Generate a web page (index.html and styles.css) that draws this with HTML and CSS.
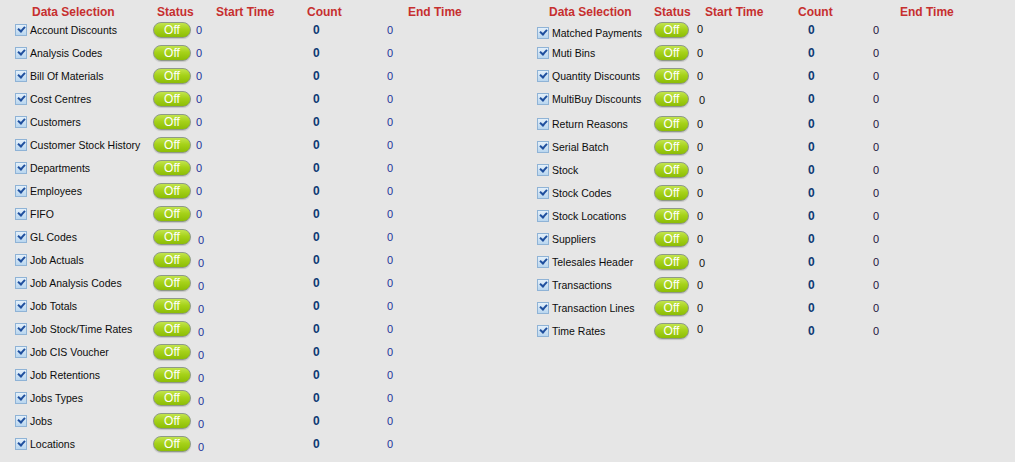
FILE: index.html
```html
<!DOCTYPE html>
<html lang="en">
<head>
    <meta charset="UTF-8">
    <title>Data Selection</title>
    <link rel="stylesheet" href="styles.css">
</head>
<body>
    <div class="page">
        <div class="panel left">
            <div class="row head">
                <div class="sel">Data Selection</div>
                <div class="stat">Status</div>
                <div class="v1">Start Time</div>
                <div class="cnt">Count</div>
                <div class="end">End Time</div>
            </div>
            <div class="row"><div class="sel"><span class="chk"></span>Account Discounts</div><div class="stat"><span class="btn">Off</span></div><div class="v1">0</div><div class="cnt">0</div><div class="end">0</div></div>
            <div class="row"><div class="sel"><span class="chk"></span>Analysis Codes</div><div class="stat"><span class="btn">Off</span></div><div class="v1">0</div><div class="cnt">0</div><div class="end">0</div></div>
            <div class="row"><div class="sel"><span class="chk"></span>Bill Of Materials</div><div class="stat"><span class="btn">Off</span></div><div class="v1">0</div><div class="cnt">0</div><div class="end">0</div></div>
            <div class="row"><div class="sel"><span class="chk"></span>Cost Centres</div><div class="stat"><span class="btn">Off</span></div><div class="v1">0</div><div class="cnt">0</div><div class="end">0</div></div>
            <div class="row"><div class="sel"><span class="chk"></span>Customers</div><div class="stat"><span class="btn">Off</span></div><div class="v1">0</div><div class="cnt">0</div><div class="end">0</div></div>
            <div class="row"><div class="sel"><span class="chk"></span>Customer Stock History</div><div class="stat"><span class="btn">Off</span></div><div class="v1">0</div><div class="cnt">0</div><div class="end">0</div></div>
            <div class="row"><div class="sel"><span class="chk"></span>Departments</div><div class="stat"><span class="btn">Off</span></div><div class="v1">0</div><div class="cnt">0</div><div class="end">0</div></div>
            <div class="row"><div class="sel"><span class="chk"></span>Employees</div><div class="stat"><span class="btn">Off</span></div><div class="v1">0</div><div class="cnt">0</div><div class="end">0</div></div>
            <div class="row"><div class="sel"><span class="chk"></span>FIFO</div><div class="stat"><span class="btn">Off</span></div><div class="v1">0</div><div class="cnt">0</div><div class="end">0</div></div>
            <div class="row low"><div class="sel"><span class="chk"></span>GL Codes</div><div class="stat"><span class="btn">Off</span></div><div class="v1">0</div><div class="cnt">0</div><div class="end">0</div></div>
            <div class="row low"><div class="sel"><span class="chk"></span>Job Actuals</div><div class="stat"><span class="btn">Off</span></div><div class="v1">0</div><div class="cnt">0</div><div class="end">0</div></div>
            <div class="row low"><div class="sel"><span class="chk"></span>Job Analysis Codes</div><div class="stat"><span class="btn">Off</span></div><div class="v1">0</div><div class="cnt">0</div><div class="end">0</div></div>
            <div class="row low"><div class="sel"><span class="chk"></span>Job Totals</div><div class="stat"><span class="btn">Off</span></div><div class="v1">0</div><div class="cnt">0</div><div class="end">0</div></div>
            <div class="row low"><div class="sel"><span class="chk"></span>Job Stock/Time Rates</div><div class="stat"><span class="btn">Off</span></div><div class="v1">0</div><div class="cnt">0</div><div class="end">0</div></div>
            <div class="row low"><div class="sel"><span class="chk"></span>Job CIS Voucher</div><div class="stat"><span class="btn">Off</span></div><div class="v1">0</div><div class="cnt">0</div><div class="end">0</div></div>
            <div class="row low"><div class="sel"><span class="chk"></span>Job Retentions</div><div class="stat"><span class="btn">Off</span></div><div class="v1">0</div><div class="cnt">0</div><div class="end">0</div></div>
            <div class="row low"><div class="sel"><span class="chk"></span>Jobs Types</div><div class="stat"><span class="btn">Off</span></div><div class="v1">0</div><div class="cnt">0</div><div class="end">0</div></div>
            <div class="row low"><div class="sel"><span class="chk"></span>Jobs</div><div class="stat"><span class="btn">Off</span></div><div class="v1">0</div><div class="cnt">0</div><div class="end">0</div></div>
            <div class="row low"><div class="sel"><span class="chk"></span>Locations</div><div class="stat"><span class="btn">Off</span></div><div class="v1">0</div><div class="cnt">0</div><div class="end">0</div></div>
        </div>

        <div class="panel right">
            <div class="row head">
                <div class="sel">Data Selection</div>
                <div class="stat">Status</div>
                <div class="v1">Start Time</div>
                <div class="cnt">Count</div>
                <div class="end">End Time</div>
            </div>
            <div class="row drop"><div class="sel"><span class="chk"></span>Matched Payments</div><div class="stat"><span class="btn">Off</span></div><div class="v1">0</div><div class="cnt">0</div><div class="end">0</div></div>
            <div class="row"><div class="sel"><span class="chk"></span>Muti Bins</div><div class="stat"><span class="btn">Off</span></div><div class="v1">0</div><div class="cnt">0</div><div class="end">0</div></div>
            <div class="row"><div class="sel"><span class="chk"></span>Quantity Discounts</div><div class="stat"><span class="btn">Off</span></div><div class="v1">0</div><div class="cnt">0</div><div class="end">0</div></div>
            <div class="row gap shift"><div class="sel"><span class="chk"></span>MultiBuy Discounts</div><div class="stat"><span class="btn">Off</span></div><div class="v1">0</div><div class="cnt">0</div><div class="end">0</div></div>
            <div class="row"><div class="sel"><span class="chk"></span>Return Reasons</div><div class="stat"><span class="btn">Off</span></div><div class="v1">0</div><div class="cnt">0</div><div class="end">0</div></div>
            <div class="row"><div class="sel"><span class="chk"></span>Serial Batch</div><div class="stat"><span class="btn">Off</span></div><div class="v1">0</div><div class="cnt">0</div><div class="end">0</div></div>
            <div class="row"><div class="sel"><span class="chk"></span>Stock</div><div class="stat"><span class="btn">Off</span></div><div class="v1">0</div><div class="cnt">0</div><div class="end">0</div></div>
            <div class="row"><div class="sel"><span class="chk"></span>Stock Codes</div><div class="stat"><span class="btn">Off</span></div><div class="v1">0</div><div class="cnt">0</div><div class="end">0</div></div>
            <div class="row"><div class="sel"><span class="chk"></span>Stock Locations</div><div class="stat"><span class="btn">Off</span></div><div class="v1">0</div><div class="cnt">0</div><div class="end">0</div></div>
            <div class="row"><div class="sel"><span class="chk"></span>Suppliers</div><div class="stat"><span class="btn">Off</span></div><div class="v1">0</div><div class="cnt">0</div><div class="end">0</div></div>
            <div class="row shift"><div class="sel"><span class="chk"></span>Telesales Header</div><div class="stat"><span class="btn">Off</span></div><div class="v1">0</div><div class="cnt">0</div><div class="end">0</div></div>
            <div class="row"><div class="sel"><span class="chk"></span>Transactions</div><div class="stat"><span class="btn">Off</span></div><div class="v1">0</div><div class="cnt">0</div><div class="end">0</div></div>
            <div class="row"><div class="sel"><span class="chk"></span>Transaction Lines</div><div class="stat"><span class="btn">Off</span></div><div class="v1">0</div><div class="cnt">0</div><div class="end">0</div></div>
            <div class="row up"><div class="sel"><span class="chk"></span>Time Rates</div><div class="stat"><span class="btn">Off</span></div><div class="v1">0</div><div class="cnt">0</div><div class="end">0</div></div>
        </div>
    </div>
</body>
</html>
```

FILE: styles.css
```css
body {
    margin: 0;
    background: #e6e6e6;
    font-family: 'Liberation Sans', Arial, sans-serif;
    font-size: 11px;
    color: #111;
}
.page {
    display: flex;
    padding-left: 13px;
}
.panel {
    display: flex;
    flex-direction: column;
}
.row {
    display: flex;
    align-items: center;
    height: 23px;
}
.row > div {
    flex: none;
    white-space: nowrap;
    box-sizing: border-box;
}

/* column widths */
.left .sel { width: 139px; }
.left .stat { width: 42px; }
.left .v1 { width: 106px; }
.left .cnt { width: 80px; }
.left .end { width: 155px; }
.right .sel { width: 118px; }
.right .stat { width: 42px; }
.right .v1 { width: 95px; }
.right .cnt { width: 70px; }
.right .end { width: 120px; }

/* data cells */
.left .row .v1 { padding-left: 2px; color: #23349a; }
.left .row .cnt { padding-left: 13px; }
.left .row .end { padding-left: 7px; color: #23349a; }
.right .row .v1 { padding-left: 2px; color: #111; }
.right .row .cnt { padding-left: 18px; }
.right .row .end { padding-left: 13px; color: #1d1240; }
.row .cnt {
    font-weight: bold;
    font-size: 12px;
    color: #0e3a74;
}

/* header row */
.panel .row.head {
    align-items: flex-start;
    padding-top: 5px;
    box-sizing: border-box;
    margin-bottom: -5px;
}
.panel .row.head > div {
    font-size: 12px;
    font-weight: bold;
    color: #c62f2f;
}
.left .row.head .sel { padding-left: 19px; }
.left .row.head .stat { padding-left: 5px; }
.left .row.head .v1 { padding-left: 22px; }
.left .row.head .cnt { padding-left: 7px; }
.left .row.head .end { padding-left: 28px; }
.right .row.head .sel { padding-left: 14px; }
.right .row.head .stat { padding-left: 1px; }
.right .row.head .v1 { padding-left: 10px; }
.right .row.head .cnt { padding-left: 8px; }
.right .row.head .end { padding-left: 40px; }

.sel {
    display: flex;
    align-items: center;
    font-size: 10.5px;
    color: #0c0c0c;
}
.chk {
    width: 10px;
    height: 10px;
    margin: 0 3px 0 2px;
    border: 1px solid #8fb3d6;
    background: linear-gradient(#e4f0fa, #b9d6ef);
    position: relative;
    flex: none;
}
.chk::after {
    content: "";
    position: absolute;
    left: 2px;
    top: 1px;
    width: 5px;
    height: 3px;
    border-left: 2px solid #1f4f9e;
    border-bottom: 2px solid #1f4f9e;
    transform: rotate(-48deg);
}
.btn {
    display: block;
    width: 36px;
    height: 14px;
    margin-left: 1px;
    border: 1px solid #8e9a86;
    border-radius: 8px;
    background: linear-gradient(#c2e44e 0%, #a6d219 45%, #8cbd06 100%);
    color: #fff;
    font-size: 12px;
    line-height: 14px;
    text-align: center;
    box-shadow: 0 1px 1px rgba(0,0,0,0.15);
}
.right .btn {
    width: 33px;
}

/* row quirks */
.left .row.low .v1 {
    padding-left: 4px;
    padding-top: 7px;
}
.row.drop .sel {
    padding-top: 6px;
}
.row.drop .v1 {
    padding-bottom: 2px;
}
.row.gap {
    margin-bottom: 2px;
}
.right .row.shift .v1 {
    padding-left: 4px;
    padding-top: 2px;
}
.right .row.up .v1 {
    padding-bottom: 3px;
}
```
